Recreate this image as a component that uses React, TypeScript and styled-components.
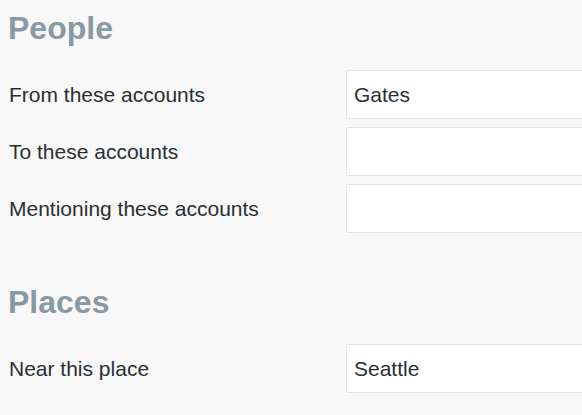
import React from "react";
import styled, { createGlobalStyle } from "styled-components";

const Global = createGlobalStyle`
  html, body {
    margin: 0;
    padding: 0;
    background: #f8f8f8;
    overflow: hidden;
  }
  body {
    font-family: "Liberation Sans", Arial, sans-serif;
  }
`;

const Page = styled.div`
  display: flex;
  flex-direction: column;
  gap: 51px;
  padding: 10px 0 0 8px;
  width: 590px;
`;

const Section = styled.section`
  display: flex;
  flex-direction: column;
`;

const Heading = styled.h2`
  margin: 0 0 24px 0;
  font-size: 32px;
  line-height: 36px;
  font-weight: bold;
  color: #8899a6;
`;

const Rows = styled.div`
  display: flex;
  flex-direction: column;
  gap: 8px;
`;

const Row = styled.label`
  display: grid;
  grid-template-columns: 338px 1fr;
  align-items: center;
  height: 49px;
`;

const LabelText = styled.span`
  font-size: 21px;
  color: #292f33;
  padding-left: 1px;
`;

const Field = styled.input`
  box-sizing: border-box;
  height: 49px;
  width: 100%;
  border: 1px solid #e3e3e3;
  border-right: none;
  border-radius: 2px 0 0 2px;
  background: #ffffff;
  padding: 0 7px;
  font-family: "Liberation Sans", Arial, sans-serif;
  font-size: 21px;
  color: #292f33;
  outline: none;
`;

type FieldDef = { label: string; value: string };

const sections: { title: string; fields: FieldDef[] }[] = [
  {
    title: "People",
    fields: [
      { label: "From these accounts", value: "Gates" },
      { label: "To these accounts", value: "" },
      { label: "Mentioning these accounts", value: "" },
    ],
  },
  {
    title: "Places",
    fields: [{ label: "Near this place", value: "Seattle" }],
  },
];

export default function App() {
  return (
    <>
      <Global />
      <Page>
        {sections.map((s) => (
          <Section key={s.title}>
            <Heading>{s.title}</Heading>
            <Rows>
              {s.fields.map((f) => (
                <Row key={f.label}>
                  <LabelText>{f.label}</LabelText>
                  <Field type="text" defaultValue={f.value} />
                </Row>
              ))}
            </Rows>
          </Section>
        ))}
      </Page>
    </>
  );
}
